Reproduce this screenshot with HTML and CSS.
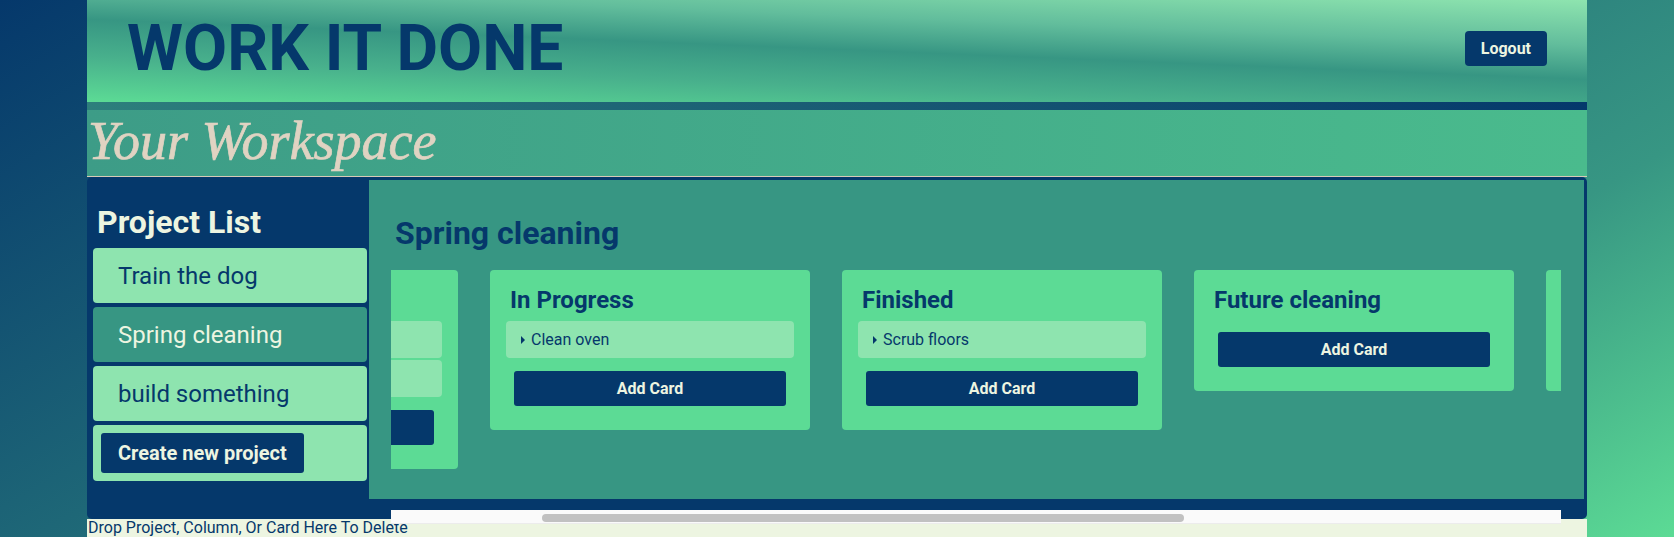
FILE: index.html
```html
<!DOCTYPE html>
<html lang="en">
<head>
<meta charset="utf-8">
<title>Work It Done</title>
<link rel="stylesheet" href="styles.css">
</head>
<body>
<div class="page">
  <header class="topbar">
    <h1 class="brand">WORK IT DONE</h1>
    <button class="logout">Logout</button>
  </header>
  <div class="workspace-head">
    <h2 class="workspace-title">Your Workspace</h2>
  </div>
  <main class="workspace">
    <aside class="sidebar">
      <h2 class="sidebar-title">Project List</h2>
      <ul class="project-list">
        <li class="project">Train the dog</li>
        <li class="project active">Spring cleaning</li>
        <li class="project">build something</li>
        <li class="project create"><button class="create-btn">Create new project</button></li>
      </ul>
    </aside>
    <section class="project-panel">
      <h2 class="project-title">Spring cleaning</h2>
      <div class="board">
        <div class="board-viewport">
          <div class="columns">
            <div class="column">
              <h3 class="column-title">To do</h3>
              <div class="cards">
                <details class="card"><summary>Wash windows</summary></details>
                <details class="card"><summary>Dust shelves</summary></details>
              </div>
              <button class="add-card">Add Card</button>
            </div>
            <div class="column">
              <h3 class="column-title">In Progress</h3>
              <div class="cards">
                <details class="card"><summary>Clean oven</summary></details>
              </div>
              <button class="add-card">Add Card</button>
            </div>
            <div class="column">
              <h3 class="column-title">Finished</h3>
              <div class="cards">
                <details class="card"><summary>Scrub floors</summary></details>
              </div>
              <button class="add-card">Add Card</button>
            </div>
            <div class="column">
              <h3 class="column-title">Future cleaning</h3>
              <div class="cards"></div>
              <button class="add-card">Add Card</button>
            </div>
            <div class="column">
              <h3 class="column-title">Ideas</h3>
              <div class="cards"></div>
              <button class="add-card">Add Card</button>
            </div>
          </div>
        </div>
        <div class="scrollbar"><div class="thumb"></div></div>
      </div>
    </section>
  </main>
  <div class="trash">Drop Project, Column, Or Card Here To Delete</div>
</div>
</body>
</html>
```

FILE: styles.css
```css
* { box-sizing: border-box; }

html, body {
  margin: 0;
  padding: 0;
  height: 100%;
}

body {
  font-family: Roboto, "Liberation Sans", sans-serif;
  background: linear-gradient(150deg, #05386b 0%, #379683 74%, #5cdb95 100%);
  color: #05386b;
}

.page {
  width: 1500px;
  margin: 0 auto;
}

/* ---------- header ---------- */
.topbar {
  height: 110px;
  display: flex;
  justify-content: space-between;
  align-items: flex-start;
  padding: 0 40px;
  border-bottom: 8px solid transparent;
  background:
    linear-gradient(to right, #2d7f7c, #05386b) bottom / 100% 8px no-repeat border-box,
    linear-gradient(182.3deg, #8ee4af 0%, #62bd9c 28%, #379683 49%, #48b08c 72%, #5cdb95 100%) padding-box;
}

.brand {
  margin: 11px 0 0;
  font-size: 64px;
  line-height: 75px;
  font-weight: 700;
  color: #05386b;
}

.logout {
  margin-top: 31px;
  height: 35px;
  padding: 0 16px;
  border: none;
  border-radius: 4px;
  background: #05386b;
  color: #edf5e1;
  font-family: Roboto, sans-serif;
  font-weight: 700;
  font-size: 16px;
}

/* ---------- workspace heading ---------- */
.workspace-head {
  height: 67px;
  padding: 1px 1px 0;
  background: linear-gradient(to right, #3d9c87, #4abb8d);
  border-bottom: 1px solid #d8cbb6;
}

.workspace-title {
  margin: 0;
  font-family: "Liberation Serif", serif;
  font-style: italic;
  font-weight: 400;
  font-size: 54px;
  line-height: 61px;
  color: #e0d3c2;
  -webkit-text-stroke: 0.7px #e0d3c2;
}

/* ---------- main area ---------- */
.workspace {
  display: flex;
  background: #05386b;
  border-radius: 5px;
  padding: 3px 3px 0 0;
}

.sidebar {
  width: 282px;
  flex: none;
  padding: 0 2px 38px 6px;
}

.sidebar-title {
  margin: 24px 0 7px 4px;
  font-size: 32px;
  line-height: 37px;
  font-weight: 700;
  color: #edf5e1;
}

.project-list {
  list-style: none;
  margin: 0;
  padding: 0;
  display: flex;
  flex-direction: column;
  gap: 4px;
}

.project {
  height: 55px;
  display: flex;
  align-items: center;
  padding-left: 25px;
  background: #8ee4af;
  border-radius: 4px;
  font-size: 24px;
  color: #05386b;
}

.project.active {
  background: #379683;
  color: #edf5e1;
}

.project.create {
  height: 56px;
  padding-left: 8px;
}

.create-btn {
  height: 40px;
  padding: 0 17px;
  border: none;
  border-radius: 3px;
  background: #05386b;
  color: #edf5e1;
  font-family: Roboto, sans-serif;
  font-weight: 700;
  font-size: 20px;
}

/* ---------- project panel ---------- */
.project-panel {
  flex: 1;
  min-width: 0;
  height: 319px;
  background: #379683;
  padding: 0 23px 0 22px;
}

.project-title {
  margin: 35px 0 0 4px;
  font-size: 32px;
  line-height: 37px;
  font-weight: 700;
  color: #05386b;
}

.board {
  margin-top: 18px;
}

.board-viewport {
  height: 240px;
  overflow: hidden;
}

.columns {
  display: flex;
  align-items: flex-start;
  gap: 32px;
  margin-left: -253px;
}

.column {
  width: 320px;
  flex: none;
  padding: 16px 16px 24px;
  background: #5cdb95;
  border-radius: 4px;
}

.column-title {
  margin: 0 0 4px;
  padding-left: 4px;
  font-size: 24px;
  line-height: 29px;
  font-weight: 700;
  color: #05386b;
  white-space: nowrap;
}

.cards {
  display: flex;
  flex-direction: column;
}

.card {
  background: #8ee4af;
  border-radius: 4px;
  margin-top: 2px;
}

.card summary {
  list-style: none;
  display: flex;
  align-items: center;
  height: 37px;
  padding: 0 15px;
  font-size: 16px;
  color: #05386b;
  white-space: nowrap;
}

.card summary::-webkit-details-marker { display: none; }

.card summary::before {
  content: "";
  border-left: 4px solid #05386b;
  border-top: 4px solid transparent;
  border-bottom: 4px solid transparent;
  margin-right: 6px;
}

.add-card {
  display: block;
  width: calc(100% - 16px);
  height: 35px;
  margin: 13px 8px 0;
  border: none;
  border-radius: 3px;
  background: #05386b;
  color: #edf5e1;
  font-family: Roboto, sans-serif;
  font-weight: 700;
  font-size: 16px;
}

.scrollbar {
  position: relative;
  height: 14px;
  padding-top: 4px;
  background: #fafafa;
  border-bottom: 1px solid #ececec;
}

.thumb {
  width: 642px;
  height: 8px;
  margin-left: 151px;
  border-radius: 4px;
  background: #c1c1c1;
}

/* ---------- trash strip ---------- */
.trash {
  background: #edf5e1;
  font-size: 16px;
  line-height: 18px;
  color: #05386b;
  padding-left: 1px;
}
```
